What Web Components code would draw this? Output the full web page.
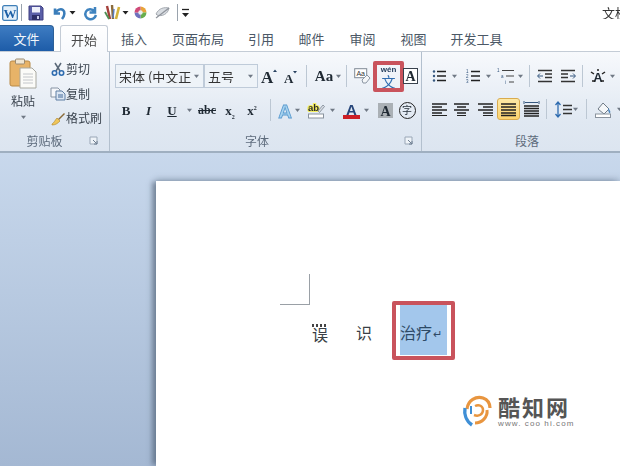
<!DOCTYPE html>
<html lang="zh"><head><meta charset="utf-8"><title>Word</title>
<style>
html,body{margin:0;padding:0;width:620px;height:466px;overflow:hidden;background:#fff}
body{font-family:"Noto Sans CJK SC","Liberation Sans",sans-serif}
</style></head>
<body><word-app></word-app>
<script>
const L=(a,c='#222',w=1.4)=>`<path d="${a.map(([x1,x2,y])=>`M${x1} ${y}H${x2}`).join('')}" stroke="${c}" stroke-width="${w}" fill="none"/>`;
const dots=(a,c='#35577f')=>a.map(([x,y])=>`<circle cx="${x}" cy="${y}" r="1.2" fill="${c}"/>`).join('');
const S=(w,h,b)=>`<svg xmlns="http://www.w3.org/2000/svg" width="${w}" height="${h}" viewBox="0 0 ${w} ${h}" style="overflow:visible">${b}</svg>`;
const ICONS={
word:S(16,16,`<rect x=".7" y=".7" width="14.6" height="14.6" rx="1.5" fill="#e4f0fa" stroke="#3f7fb8" stroke-width="1.3"/><text x="8" y="12.6" text-anchor="middle" font-family="Liberation Serif" font-weight="700" font-size="13" fill="#1d5fa5">W</text>`),
save:S(16,16,`<path d="M1 1h12l2 2v12H1z" fill="#5a5fa8" stroke="#3f3f80"/><rect x="4" y="2" width="8" height="5.5" fill="#eef0fa"/><rect x="4" y="10" width="8" height="5" fill="#2d2f68"/><rect x="9" y="11" width="2" height="3" fill="#c8cbe8"/>`),
undo:S(15,16,`<path d="M3 3.5v5h5M3.5 8C5 4.5 9 3.5 11 5s2 5.5-1 9" fill="none" stroke="#3a7dba" stroke-width="2.6"/>`),
redo:S(15,16,`<path d="M12 2v5.5H6.5M11.5 6.5C9 3 4.6 3.7 3 6.5S2.600 13 6 14 12 13 13 10" fill="none" stroke="#3f83bf" stroke-width="2.5"/>`),
brush:S(18,17,`<path d="M3 2l3 13" stroke="#a33f3a" stroke-width="2.400"/><path d="M8 1l1 14" stroke="#8a6b3c" stroke-width="2.400"/><path d="M15 3l-3 12" stroke="#d4b23b" stroke-width="2.600"/><path d="M1 8l4 7" stroke="#4e8f52" stroke-width="1.800"/><path d="M10 5l-1 9" stroke="#5b7dc0" stroke-width="1.500"/>`),
wheel:S(13,13,`<path d="M6.500 6.500V.5A6 6 0 0 1 12.500 6.500z" fill="#e8a33a"/><path d="M6.500 6.500H12.500A6 6 0 0 1 6.500 12.500z" fill="#68ad4d"/><path d="M6.500 6.500V12.500A6 6 0 0 1 .5 6.500z" fill="#6f71bd"/><path d="M6.500 6.500H.5A6 6 0 0 1 6.500 .5z" fill="#cf4a78"/><circle cx="6.500" cy="6.500" r="2.200" fill="#e8eef2"/>`),
eye:S(15,13,`<path d="M1 8c3-6 8-7 13-6-1 6-7 9-12 7z" fill="#d9dde2" stroke="#a4a9b0"/><path d="M1 12L14 2" stroke="#8e939b" stroke-width="1.200"/>`),
darr:S(7,7,`<path d="M.5 2h6L3.500 5.500z" fill="#222"/>`),
qmore:S(9,12,`<path d="M1 2.500h7" stroke="#222" stroke-width="1.300"/><path d="M1 6h7L4.500 10z" fill="#222"/>`),
arr:S(7,5,`<path d="M1 .8h5L3.500 4z" fill="#6f7884"/>`),
launch:S(10,10,`<path d="M1 1h7v7H1z" fill="#eef3f8" stroke="#9aa7b6"/><path d="M4 4l4 4M8 5v3H5" stroke="#6f7f92" fill="none"/>`),
paste:S(28,32,`<rect x="1" y="3" width="20" height="25" rx="2" fill="#e7b368" stroke="#b88a47"/><rect x="6.500" y="1" width="9" height="5" rx="1" fill="#f0e6d2" stroke="#9b8a70"/><path d="M11 10h12l4 4v16H11z" fill="#fbfbf8" stroke="#a8a8a0"/>${L([[14,24,16],[14,24,19],[14,24,22],[14,24,25]],'#c3c6ca',1)}`),
cut:S(14,14,`<path d="M4 1l5 8M10 1L5 9" stroke="#5a6878" stroke-width="1.500"/><circle cx="3.500" cy="11" r="2.200" fill="none" stroke="#2f6cb0" stroke-width="1.600"/><circle cx="10.500" cy="11" r="2.200" fill="none" stroke="#2f6cb0" stroke-width="1.600"/>`),
copy:S(16,14,`<path d="M1 1h7l2 2v7H1z" fill="#f5f7fa" stroke="#8794a3"/><path d="M6 4h6l3 3v6H6z" fill="#dbe6f3" stroke="#5f7fa4"/>${L([[8,13,8],[8,13,10]],'#446b99',1)}`),
fmt:S(16,15,`<path d="M8 8l6-6 1 1-6 6z" fill="#8a6a38"/><path d="M2 13c2-1 3-4 5-6l3 3c-2 2-4 4-8 4z" fill="#f0c65a" stroke="#b58d33" stroke-width=".7"/>`),
grow:S(17,17,`<text x="0" y="15" font-family="Liberation Serif" font-weight="700" font-size="17" fill="#1f2933">A</text><path d="M12 4l2-2.500L16 4z" fill="#27405f"/>`),
shrink:S(14,15,`<text x="0" y="14" font-family="Liberation Serif" font-weight="700" font-size="13" fill="#1f2933">A</text><path d="M9 2h4l-2 2.500z" fill="#27405f"/>`),
clear:S(17,17,`<rect x=".7" y=".7" width="12" height="9" fill="#fff" stroke="#7f8994"/><text x="6.700" y="8" text-anchor="middle" font-family="Liberation Sans" font-size="7" fill="#333">Aa</text><path d="M8 12l5-5 3 3-4 5h-3z" fill="#f4f6f8" stroke="#8b96a3"/>`),
boxA:S(15,16,`<rect x=".5" y=".5" width="14" height="15" fill="#fff" stroke="#39424d"/><text x="7.500" y="13" text-anchor="middle" font-family="Liberation Serif" font-weight="700" font-size="14" fill="#1f2933">A</text>`),
shadeA:S(15,15,`<rect width="15" height="15" fill="#aab0b5"/><text x="7.500" y="13" text-anchor="middle" font-family="Liberation Serif" font-weight="700" font-size="14" fill="#1f2933">A</text>`),
fx:S(18,17,`<text x="9" y="15.500" text-anchor="middle" font-family="Liberation Sans" font-weight="700" font-size="19" fill="#a7d3ef" stroke="#5b9bcf" stroke-width=".8">A</text>`),
hl:S(17,17,`<text x="0" y="9" font-family="Liberation Sans" font-weight="700" font-size="9.500" fill="#2a2a2a" style="paint-order:stroke" stroke="#f4ee5c" stroke-width="2">ab</text><path d="M10 9l5-6 1.500 1.500-5 6z" fill="#d8dde4" stroke="#6f7a86" stroke-width=".7"/><rect x=".5" y="12" width="15" height="4" fill="#fff" stroke="#8a939e"/>`),
colorA:S(17,17,`<text x="8.500" y="12.500" text-anchor="middle" font-family="Liberation Sans" font-weight="700" font-size="15" fill="#27467a">A</text><rect y="13" width="17" height="4" fill="#cc1f26"/>`),
bullets:S(15,14,dots([[2,2.500],[2,7],[2,11.500]])+L([[5,14,2.500],[5,14,7],[5,14,11.500]])),
numbers:S(15,14,`<g font-family="Liberation Sans" font-size="4.500" fill="#35577f"><text x="0" y="4">1</text><text x="0" y="9">2</text><text x="0" y="14">3</text></g>`+L([[5,14,2.500],[5,14,7],[5,14,11.500]])),
multi:S(20,17,`<g font-family="Liberation Sans" font-size="4.500" fill="#35577f"><text x="0" y="4">1</text><text x="4" y="10">a</text><text x="8" y="16">i</text></g>`+L([[5,17,2.500],[9,17,8],[12,17,14]],'#444',1.200)),
indL:S(16,15,L([[1,15,1.500],[8,15,5],[8,15,8.500],[1,15,12.500]],'#333',1.300)+`<path d="M6 7H1M3 4.500L.5 7 3 9.500" stroke="#35577f" fill="none"/>`),
indR:S(16,15,L([[1,15,1.500],[1,8,5],[1,8,8.500],[1,15,12.500]],'#333',1.300)+`<path d="M10 7h5M13 4.500L15.500 7 13 9.500" stroke="#35577f" fill="none"/>`),
sort:S(16,14,`<text x="8" y="12.500" text-anchor="middle" font-family="Liberation Sans" font-weight="700" font-size="13" fill="#1f2933">A</text><path d="M1 3l3 2M15 3l-3 2M8 0v2M2 12h3M11 12h3" stroke="#222" stroke-width="1.500"/>`),
alignL:S(15,13,L([[0,15,1],[0,10,4],[0,15,7],[0,10,10]],'#222',1.500)+L([[0,15,12.500]],'#222',1)),
alignC:S(15,13,L([[0,15,1],[3,12,4],[0,15,7],[3,12,10]],'#222',1.500)+L([[3,12,12.500]],'#222',1)),
alignR:S(15,13,L([[0,15,1],[5,15,4],[0,15,7],[5,15,10]],'#222',1.500)+L([[5,15,12.500]],'#222',1)),
justify:S(15,13,L([[0,15,1],[0,15,4],[0,15,7],[0,15,10],[0,15,12.500]],'#222',1.500)),
dist:S(17,16,L([[1,16,5],[1,16,7.500],[1,16,10],[1,16,12.500],[1,16,15]],'#222',1.300)+`<path d="M1 0v3M16 0v3M2 1.500h13" stroke="#35577f" fill="none"/>`),
spacing:S(17,17,`<path d="M3 1v15M.5 4L3 1l2.500 3M.5 13L3 16l2.500-3" stroke="#2f6cb0" stroke-width="1.300" fill="none"/>`+L([[8,17,4.500],[8,17,8.500],[8,17,12.500]],'#333',1.300)),
shade:S(17,17,`<path d="M3 8l5-6 6 6-5 5z" fill="#f5f7f9" stroke="#6f7a86"/><path d="M13 7c2 2 3 4 2 5s-2-2-2-5z" fill="#4e86bd"/><rect x=".5" y="13" width="15" height="3.500" fill="#fff" stroke="#8a939e"/>`),
logo:S(28,32,`<path d="M4 14C5 5 13 1 20 3c4 1.500 7 5 7 10" fill="none" stroke="#e8953f" stroke-width="3.200"/><path d="M24 15c1 7-5 13-12 13" fill="none" stroke="#e8953f" stroke-width="3"/><path d="M2 13c-1 6 1 13 7 17" fill="none" stroke="#3f8fd6" stroke-width="3.400"/><path d="M12 11c4-2 8 0 8 4s-4 7-9 5" fill="none" stroke="#e8953f" stroke-width="2.500"/><path d="M8 11v8" stroke="#3f8fd6" stroke-width="2"/>`)
};
function def(name,css,html,init){
  customElements.define(name,class extends HTMLElement{
    constructor(){super();const r=this.attachShadow({mode:'open'});r.innerHTML=`<style>${css}</style>`+(typeof html==='function'?html(this):html);}
    connectedCallback(){if(init)init(this);}
  });
}
def('rb-icon',':host{display:inline-flex;line-height:0;flex:none}','<span></span>',h=>{h.shadowRoot.querySelector('span').innerHTML=ICONS[h.getAttribute('name')]||''});
def('rb-tool',`:host{display:flex;align-items:center;justify-content:center;flex:none;height:100%;position:relative;box-sizing:border-box;font-family:"Liberation Serif",serif;color:#1f2933;line-height:1}
:host([on]){background:linear-gradient(#fde9a6,#fbd36f);border:1px solid #d9ab4e;border-radius:3px}
:host([framed])::after{content:"";position:absolute;left:-2px;right:-2px;top:-3px;bottom:-4px;border:4px solid #c9535c;border-radius:2px}`,
 '<slot></slot>',h=>{h.style.width=h.getAttribute('w')+'px';const n=h.getAttribute('icon');if(n){const i=document.createElement('rb-icon');i.setAttribute('name',n);h.shadowRoot.appendChild(i);}});
def('rb-sep',`:host{display:flex;justify-content:center;flex:none;height:100%}
i{display:block;width:1px;background:#bcc7d3;margin:1px 0}`,'<i></i>',h=>{h.style.width=(h.getAttribute('w')||8)+'px'});
def('rb-space',':host{display:block;flex:none}','',h=>{h.style.width=h.getAttribute('w')+'px'});
def('rb-combo',`:host{display:flex;align-items:center;flex:none;height:24px;box-sizing:border-box;border:1px solid #bfcbd9;background:#eef3f8;font:13px/1 "Noto Sans CJK SC",sans-serif;color:#333;padding-left:3px;overflow:hidden;white-space:nowrap}
span{flex:1;overflow:hidden}rb-icon{margin:0 3px 0 2px}`,'<span><slot></slot></span><rb-icon name="arr"></rb-icon>',h=>{h.style.width=h.getAttribute('w')+'px'});
def('rb-row',':host{display:flex;align-items:stretch;flex:none}','<slot></slot>',h=>{h.style.height=h.getAttribute('h')+'px';h.style.marginTop=(h.getAttribute('top')||0)+'px';h.style.paddingLeft=(h.getAttribute('left')||0)+'px'});
def('rb-group',`:host{display:flex;flex-direction:column;flex:none;box-sizing:border-box;height:100%;border-right:1px solid #b3c0ce;background:linear-gradient(#f7f9fc,#e0e8f2 70%,#dce5f0)}
.body{flex:1;min-height:0;display:flex;flex-direction:column}
.foot{height:21px;display:flex;align-items:center;flex:none;font:12px/1 "Noto Sans CJK SC",sans-serif;color:#5d6b7c}
.lab{flex:1;text-align:center}
.ln{width:var(--ln,17px);display:flex;flex:none}`,
 h=>`<div class="body"><slot></slot></div><div class="foot"><span class="lab">${h.getAttribute('label')}</span><span class="ln"><rb-icon name="launch"></rb-icon></span></div>`,
 h=>{h.style.width=h.getAttribute('w')+'px';if(h.getAttribute('ln'))h.style.setProperty('--ln',h.getAttribute('ln')+'px')});
def('clip-item',`:host{display:flex;align-items:center;height:24.5px;font:12px/1 "Noto Sans CJK SC",sans-serif;color:#39424d}
.i{width:17px;display:flex;justify-content:center;margin-right:0}`,
 h=>`<span class="i"><rb-icon name="${h.getAttribute('icon')}"></rb-icon></span><slot></slot>`);
def('title-bar',`:host{display:flex;align-items:center;height:25px;flex:none;background:#fff;position:relative;font:13px/1 "Noto Sans CJK SC",sans-serif;color:#333;overflow:hidden}
.sep{width:1px;height:17px;background:#9aa3ad;flex:none}
.t{margin-left:auto;white-space:nowrap;width:18px;overflow:hidden;flex:none}`,
`<rb-space w="2"></rb-space><rb-icon name="word"></rb-icon><rb-space w="3"></rb-space><span class="sep"></span><rb-space w="6"></rb-space>
<rb-icon name="save"></rb-icon><rb-space w="8"></rb-space><rb-icon name="undo"></rb-icon><rb-space w="2"></rb-space><rb-icon name="darr"></rb-icon><rb-space w="7"></rb-space><rb-icon name="redo"></rb-icon><rb-space w="6"></rb-space><rb-icon name="brush"></rb-icon><rb-icon name="darr"></rb-icon><rb-space w="5"></rb-space><rb-icon name="wheel"></rb-icon><rb-space w="8"></rb-space><rb-icon name="eye"></rb-icon><rb-space w="7"></rb-space><span class="sep"></span><rb-space w="3"></rb-space><rb-icon name="qmore"></rb-icon><span class="t">文档</span>`);
def('tab-item',`:host{display:flex;align-items:center;justify-content:center;flex:none;height:100%;box-sizing:border-box;font:13px/1 "Noto Sans CJK SC",sans-serif;color:#4b5866}
:host([file]){background:linear-gradient(#3e7cc2,#1d5ca8);color:#f2f7fc;border-radius:0 4px 0 0;border:1px solid #2d6098;border-bottom:0;border-left:0}
:host([on]){background:linear-gradient(#fff,#f7f9fc);color:#4a4a4a;border:1px solid #c4ccd6;border-bottom:0;border-radius:3px 3px 0 0;height:27px;position:relative;z-index:1}`,
 '<slot></slot>',h=>{h.style.width=h.getAttribute('w')+'px'});
def('ribbon-tabs',`:host{display:flex;height:26px;flex:none;background:#fff}`,
`<tab-item file w="54">文件</tab-item><rb-space w="6"></rb-space><tab-item on w="48">开始</tab-item>
<tab-item w="52">插入</tab-item><tab-item w="76">页面布局</tab-item><tab-item w="50">引用</tab-item><tab-item w="51">邮件</tab-item><tab-item w="51">审阅</tab-item><tab-item w="51">视图</tab-item><tab-item w="75">开发工具</tab-item>`);
def('ribbon-panel',`:host{display:flex;height:99px;flex:none;overflow:hidden;border-top:1px solid #c4ccd6;border-bottom:2px solid #9fafc0}
.clip{display:flex;flex:1;min-height:0}
.pc{width:46px;display:flex;flex-direction:column;align-items:center;padding-top:6px;font:12px/1 "Noto Sans CJK SC",sans-serif;color:#39424d;box-sizing:border-box}
.pc span{margin:5px 0 8px}
.items{padding-top:5px;margin-left:3px}
b,i.it,u{font-family:"Liberation Serif",serif;font-weight:700;font-size:13px}
.sm{font-family:"Liberation Serif",serif;font-weight:700;font-size:12px}
sub,sup{font-size:6px;line-height:0}
.aa{font-size:15px;font-weight:700}
.ch{display:inline-flex;width:17px;height:17px;border:1.500px solid #222;border-radius:50%;box-sizing:border-box;align-items:center;justify-content:center;font:10px/1 "Noto Sans CJK SC",sans-serif}
.wen{display:flex;flex-direction:column;align-items:center;font-family:"Noto Sans CJK SC",sans-serif;line-height:1;padding-top:2px}
.wen small{font:700 8px/8px "Liberation Sans",sans-serif;color:#27405f}
.wen span{font-size:14px;line-height:14px;color:#2f6cb0}`,
`<rb-group w="110" label="剪贴板" ln="20"><div class="clip"><div class="pc"><rb-icon name="paste"></rb-icon><span>粘贴</span><rb-icon name="arr"></rb-icon></div>
<div class="items"><clip-item icon="cut">剪切</clip-item><clip-item icon="copy">复制</clip-item><clip-item icon="fmt">格式刷</clip-item></div></div></rb-group>
<rb-group w="312" label="字体">
<rb-row h="24" top="12" left="5"><rb-combo w="89">宋体 (中文正文</rb-combo><rb-combo w="54">五号</rb-combo>
<rb-tool w="22" icon="grow"></rb-tool><rb-tool w="22" icon="shrink"></rb-tool><rb-sep></rb-sep><rb-space w="3"></rb-space><rb-tool w="22"><span class="aa">Aa</span></rb-tool><rb-tool w="7" icon="arr"></rb-tool><rb-sep></rb-sep><rb-tool w="25" icon="clear"></rb-tool><rb-tool w="27" framed><span class="wen"><small>wén</small><span>文</span></span></rb-tool><rb-tool w="16" icon="boxA"></rb-tool></rb-row>
<rb-row h="24" top="10" left="5"><rb-tool w="22"><b>B</b></rb-tool><rb-tool w="23"><i class="it">I</i></rb-tool><rb-tool w="24"><u>U</u></rb-tool><rb-tool w="11" icon="arr"></rb-tool><rb-tool w="24"><span class="sm"><s>abc</s></span></rb-tool><rb-tool w="22"><b>x<sub>2</sub></b></rb-tool><rb-tool w="22"><b>x<sup>2</sup></b></rb-tool><rb-sep w="14"></rb-sep><rb-tool w="16" icon="fx"></rb-tool><rb-tool w="8" icon="arr"></rb-tool><rb-space w="3"></rb-space><rb-tool w="24" icon="hl"></rb-tool><rb-tool w="9" icon="arr"></rb-tool><rb-space w="3"></rb-space><rb-tool w="22" icon="colorA"></rb-tool><rb-tool w="8" icon="arr"></rb-tool><rb-space w="4"></rb-space><rb-tool w="22" icon="shadeA"></rb-tool><rb-tool w="22"><span class="ch">字</span></rb-tool></rb-row>
</rb-group>
<rb-group w="228" label="段落">
<rb-row h="24" top="12" left="5"><rb-tool w="24" icon="bullets"></rb-tool><rb-tool w="7" icon="arr"></rb-tool><rb-space w="3"></rb-space><rb-tool w="24" icon="numbers"></rb-tool><rb-tool w="7" icon="arr"></rb-tool><rb-space w="4"></rb-space><rb-tool w="22" icon="multi"></rb-tool><rb-tool w="5" icon="arr"></rb-tool><rb-space w="2"></rb-space><rb-sep></rb-sep><rb-tool w="24" icon="indL"></rb-tool><rb-tool w="21" icon="indR"></rb-tool><rb-sep></rb-sep><rb-tool w="24" icon="sort"></rb-tool><rb-tool w="5" icon="arr"></rb-tool></rb-row>
<rb-row h="22" top="10" left="5"><rb-tool w="24" icon="alignL"></rb-tool><rb-tool w="20" icon="alignC"></rb-tool><rb-space w="4"></rb-space><rb-tool w="20" icon="alignR"></rb-tool><rb-space w="2"></rb-space><rb-tool w="23" on icon="justify"></rb-tool><rb-tool w="22" icon="dist"></rb-tool><rb-sep></rb-sep><rb-space w="4"></rb-space><rb-tool w="18" icon="spacing"></rb-tool><rb-tool w="7" icon="arr"></rb-tool><rb-space w="3"></rb-space><rb-sep></rb-sep><rb-tool w="26" icon="shade"></rb-tool><rb-tool w="7" icon="arr"></rb-tool></rb-row>
</rb-group>`);
def('doc-page',`:host{display:block;height:100%;background:#fff;box-sizing:border-box;padding:93px 0 0 124px;position:relative;box-shadow:-5px 0 5px -1px rgba(70,85,105,.55),0 -2px 6px rgba(90,105,130,.35);font:16px/1 "Liberation Serif","Noto Sans CJK SC",serif;color:#3a3f46}
.crop{width:29px;height:30px;border-right:1px solid #9aa0a6;border-bottom:1px solid #9aa0a6}
.line{display:flex;align-items:center;height:50px;padding-left:32px}
.g{width:44px;flex:none;padding-top:8px;box-sizing:border-box}
.d{display:block;width:16px;height:3px;margin-bottom:1px;background:repeating-linear-gradient(90deg,#444 0 2px,transparent 2px 4px)}
.g2{padding-top:7px}
.sel{width:47px;height:50px;background:#a3c7ec;position:relative;display:flex;align-items:center;color:#2d4a66;white-space:nowrap;flex:none;padding-top:8px;box-sizing:border-box}
.sel::after{content:"";position:absolute;left:-8px;right:-8px;top:-4px;bottom:-5px;border:4px solid #c9535c;border-radius:2px}
.r{font-size:11px;margin-left:1px}
.wm{position:absolute;left:307px;top:214px;display:flex;gap:7px;color:#555}
.wt{display:flex;flex-direction:column;gap:3px}
.wt b{font:700 22px/22px "Noto Sans CJK SC",sans-serif;letter-spacing:2px;color:#555}
.wt small{font:8px/8px "Liberation Sans",sans-serif;letter-spacing:1.100px;color:#777;white-space:nowrap}`,
`<div class="crop"></div><div class="line"><div class="g"><span class="d"></span>误</div><div class="g g2">识</div><div class="sel">治疗<span class="r">↵</span></div></div>
<div class="wm"><rb-icon name="logo"></rb-icon><div class="wt"><b>酷知网</b><small>www. coo hi.com</small></div></div>`);
def('doc-area',`:host{display:block;flex:1;min-height:0;padding:28px 0 0 156px;background:linear-gradient(#c8d8ec,#a4b8d3);overflow:hidden}`,'<doc-page></doc-page>');
def('word-app',`:host{display:flex;flex-direction:column;width:620px;height:466px;overflow:hidden;filter:blur(.3px)}`,
'<title-bar></title-bar><ribbon-tabs></ribbon-tabs><ribbon-panel></ribbon-panel><doc-area></doc-area>');
</script>
</body></html>
